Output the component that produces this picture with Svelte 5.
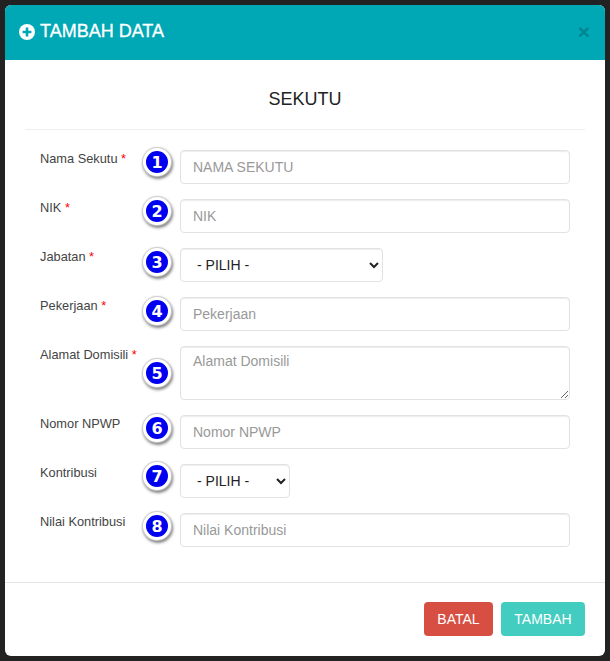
<script lang="ts">
  // dy = where the numbered badge sits relative to the top of its field
  const rows = [
    { label: 'Nama Sekutu', req: true, kind: 'input', ph: 'NAMA SEKUTU', dy: -2 },
    { label: 'NIK', req: true, kind: 'input', ph: 'NIK', dy: -2 },
    { label: 'Jabatan', req: true, kind: 'select', wide: true, dy: 0 },
    { label: 'Pekerjaan', req: true, kind: 'input', ph: 'Pekerjaan', dy: 0 },
    { label: 'Alamat Domisili', req: true, kind: 'textarea', ph: 'Alamat Domisili', dy: 13 },
    { label: 'Nomor NPWP', req: false, kind: 'input', ph: 'Nomor NPWP', dy: -1 },
    { label: 'Kontribusi', req: false, kind: 'select', wide: false, dy: -2 },
    { label: 'Nilai Kontribusi', req: false, kind: 'input', ph: 'Nilai Kontribusi', dy: -1 },
  ];
</script>

<div class="backdrop">
  <div class="modal">
    <header class="head">
      <h4>
        <svg class="plus" viewBox="0 0 16 16" width="16" height="16" aria-hidden="true">
          <circle cx="8" cy="8" r="8" fill="#fff" />
          <path d="M8 3.6v8.8M3.6 8h8.8" stroke="#00a8b5" stroke-width="2.6" />
        </svg>
        TAMBAH DATA
      </h4>
      <span class="close">×</span>
    </header>

    <div class="body">
      <h3 class="title">SEKUTU</h3>
      <form class="form">
        {#each rows as row, i}
          <div class="row">
            <div class="label">
              {row.label}{#if row.req}&nbsp;<span class="req">*</span>{/if}
            </div>
            <div class="num" style="margin-top: {row.dy}px"><span>{i + 1}</span></div>
            <div class="field">
              {#if row.kind === 'input'}
                <input type="text" placeholder={row.ph} />
              {:else if row.kind === 'textarea'}
                <textarea placeholder={row.ph}></textarea>
              {:else}
                <select class:wide={row.wide} class:narrow={!row.wide}>
                  <option>- PILIH -</option>
                </select>
              {/if}
            </div>
          </div>
        {/each}
      </form>
    </div>

    <footer class="foot">
      <button class="btn batal" type="button">BATAL</button>
      <button class="btn tambah" type="button">TAMBAH</button>
    </footer>
  </div>
</div>

<style>
  :global(body) {
    margin: 0;
    background: #222;
  }
  .backdrop {
    height: 661px;
    padding: 5px;
    box-sizing: border-box;
    background: #222;
    font-family: "Liberation Sans", Arial, sans-serif;
    overflow: hidden;
  }
  .modal {
    width: 600px;
    height: 651px;
    background: #fff;
    border-radius: 6px;
    overflow: hidden;
    display: flex;
    flex-direction: column;
  }
  .head {
    height: 55px;
    flex: none;
    background: #00a8b5;
    display: flex;
    align-items: center;
    justify-content: space-between;
    padding: 0 15px 2px 14px;
    box-sizing: border-box;
  }
  h4 {
    margin: 0;
    display: flex;
    align-items: center;
    gap: 5px;
    color: #fff;
    font-size: 18px;
    font-weight: 400;
    -webkit-text-stroke: 0.3px #fff;
  }
  .close {
    color: #000;
    opacity: 0.2;
    font-size: 21px;
    font-weight: 700;
    line-height: 1;
    margin-top: -1px;
  }
  .body {
    flex: 1;
    padding: 0 20px;
  }
  .title {
    margin: 0 0 20px;
    height: 70px;
    line-height: 79px;
    box-sizing: border-box;
    text-align: center;
    font-size: 18px;
    font-weight: 400;
    color: #222;
    border-bottom: 1px solid #eee;
  }
  .form {
    display: flex;
    flex-direction: column;
    gap: 15px;
  }
  .row {
    display: grid;
    grid-template-columns: 100px 40px 1fr;
    padding: 0 15px;
    align-items: start;
  }
  .label {
    font-size: 12.8px;
    color: #444;
    padding-top: 1px;
    white-space: nowrap;
  }
  .req {
    color: #f00;
  }
  .num {
    width: 28px;
    height: 28px;
    margin-left: 3px;
    border-radius: 50%;
    background: #0000f0;
    border: 3px solid #fff;
    box-shadow: 0 0 1px 1px #ccc, 1px 2px 3px 1px rgba(0, 0, 0, 0.5);
    display: flex;
    align-items: center;
    justify-content: center;
    color: #fff;
    font-family: "DejaVu Sans", sans-serif;
    font-weight: 700;
    font-size: 16px;
    box-sizing: border-box;
  }
  input, textarea, select {
    display: block;
    box-sizing: border-box;
    border: 1px solid #e2e2e2;
    border-radius: 4px;
    background: #fff;
    font-family: inherit;
    font-size: 14px;
    color: #222;
    outline: none;
    box-shadow: inset 0 1px 1px rgba(0, 0, 0, 0.075);
  }
  input {
    width: 100%;
    height: 34px;
    padding: 0 12px;
  }
  textarea {
    width: 100%;
    height: 54px;
    padding: 6px 12px;
    resize: vertical;
  }
  select {
    height: 34px;
    padding: 0 12px;
  }
  select.wide {
    width: 203px;
  }
  select.narrow {
    width: 110px;
  }
  ::placeholder {
    color: #999;
    opacity: 1;
  }
  .foot {
    margin-top: auto;
    height: 74px;
    flex: none;
    box-sizing: border-box;
    border-top: 1px solid #e5e5e5;
    display: flex;
    justify-content: flex-end;
    align-items: flex-start;
    gap: 8px;
    padding: 19px 20px 0;
  }
  .btn {
    height: 34px;
    width: 69px;
    border: none;
    border-radius: 4px;
    color: #fff;
    font-family: inherit;
    font-size: 14px;
    padding: 0;
  }
  .batal {
    background: #d74f43;
  }
  .tambah {
    width: 84px;
    background: #43cdc1;
  }
</style>
